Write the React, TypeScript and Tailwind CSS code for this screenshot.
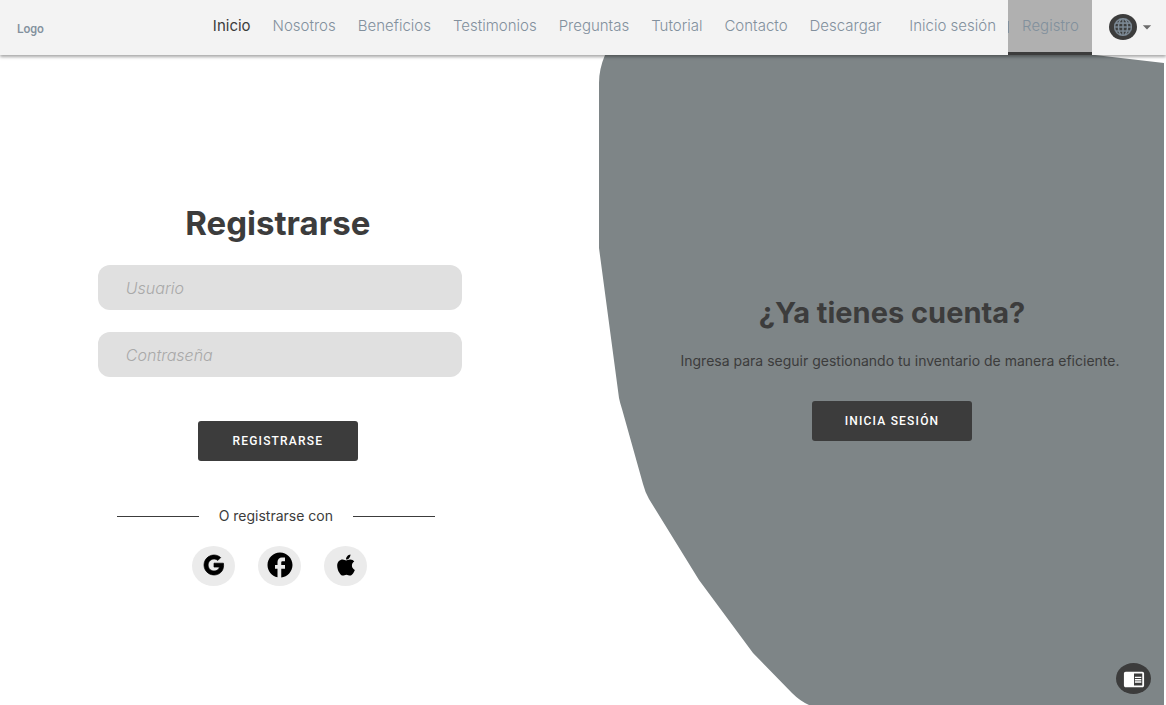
import React from "react";
import { RiGoogleFill } from "react-icons/ri";
import { MdFacebook, MdChromeReaderMode, MdArrowDropDown } from "react-icons/md";
import { FaApple } from "react-icons/fa";
import { BsGlobe } from "react-icons/bs";

const links = ["Nosotros", "Beneficios", "Testimonios", "Preguntas", "Tutorial", "Contacto", "Descargar"];

const socials = [
  { name: "Google", icon: <RiGoogleFill className="h-6 w-6" stroke="currentColor" strokeWidth={0.7} /> },
  { name: "Facebook", icon: <MdFacebook className="h-[30px] w-[30px]" /> },
  { name: "Apple", icon: <FaApple className="h-6 w-6" /> },
];

function Header() {
  return (
    <header className="relative z-10 flex h-[55px] items-stretch bg-[#f3f3f3] pl-[17px] pr-[9px] text-[#82909d] shadow-[0_2px_3px_rgba(0,0,0,0.35)]">
      <a href="#" className="mt-0.5 self-center font-['Roboto',sans-serif] text-[12px] font-medium text-[#82909d]">
        Logo
      </a>
      <nav className="ml-auto flex items-stretch text-[15px] font-light">
        <div className="flex items-center gap-[22px] pb-0.5">
          <a href="#inicio" className="font-normal text-[#3c3c3c]">
            Inicio
          </a>
          {links.map((l) => (
            <a key={l} href={"#" + l.toLowerCase()}>
              {l}
            </a>
          ))}
          <a href="#sesion" className="ml-1.5">
            Inicio sesión
          </a>
        </div>
        <a
          href="#registro"
          className="ml-3 flex w-[84px] items-center border-b-[3px] border-[#3c3c3c] bg-[#b0b0b0] pt-px"
        >
          <span className="h-3 w-px bg-[#82909d]" />
          <span className="flex-1 text-center">Registro</span>
        </a>
      </nav>
      <button type="button" aria-label="Idioma" className="ml-[17px] flex items-center pb-0.5">
        <span className="flex h-[26px] w-7 items-center justify-center rounded-[50%] bg-[#3c3c3c]">
          <BsGlobe className="h-[18px] w-[18px]" stroke="currentColor" strokeWidth={0.3} />
        </span>
        <MdArrowDropDown className="h-5 w-5 text-[#6b6b6b]" />
      </button>
    </header>
  );
}

function Field({ id, label, type }: { id: string; label: string; type: string }) {
  return (
    <input
      id={id}
      type={type}
      aria-label={label}
      placeholder={label}
      className="h-[45px] w-full rounded-xl bg-[#e0e0e0] px-7 text-[16px] text-[#3c3c3c] outline-none placeholder:font-light placeholder:italic placeholder:text-[#a9a9a9]"
    />
  );
}

function ActionButton({ children }: { children: React.ReactNode }) {
  return (
    <button
      type="submit"
      className="h-10 w-40 rounded-[3px] bg-[#3c3c3c] font-['Roboto',sans-serif] text-[12px] font-medium tracking-widest text-white"
    >
      {children}
    </button>
  );
}

export default function App() {
  return (
    <div className="flex min-h-screen flex-col bg-white font-['Inter',sans-serif] text-[#3c3c3c]">
      <Header />
      <main className="grid flex-1 grid-cols-1 grid-rows-1 overflow-hidden">
        <div className="relative col-start-1 row-start-1">
          <svg
            aria-hidden="true"
            viewBox="0 0 1166 650"
            preserveAspectRatio="none"
            className="absolute inset-0 h-full w-full"
          >
            <path
              fill="#7e8587"
              d="M605 0 Q599 14 599 28 V193 L619 343 Q620 348 622 354 L643 429 Q645 437 649 444 L699 525 L753 598 L792 638 Q800 646 809 650 H1164 V8 L1095 0 Z"
            />
          </svg>
        </div>
        <div className="relative col-start-1 row-start-1 flex">
          <section className="flex w-[48%] justify-center pb-10 pt-[144px]">
            <form className="flex w-[364px] flex-col items-center" onSubmit={(e) => e.preventDefault()}>
              <h1 className="pr-1 text-[33px] font-bold leading-[48px]">Registrarse</h1>
              <div className="mt-[18px] flex w-full flex-col gap-[22px]">
                <Field id="usuario" label="Usuario" type="text" />
                <Field id="contrasena" label="Contraseña" type="password" />
              </div>
              <div className="mt-11 pr-1">
                <ActionButton>REGISTRARSE</ActionButton>
              </div>
              <div className="mt-[43px] flex items-center gap-5 pr-2 text-[14px] leading-6">
                <span className="h-px w-[82px] bg-[#3c3c3c]" />
                O registrarse con
                <span className="h-px w-[82px] bg-[#3c3c3c]" />
              </div>
              <div className="mt-[18px] flex gap-[23px]">
                {socials.map((s) => (
                  <button
                    key={s.name}
                    type="button"
                    aria-label={s.name}
                    className="flex h-10 w-[43px] items-center justify-center rounded-[50%] bg-[#ebebeb] pb-0.5 text-black"
                  >
                    {s.icon}
                  </button>
                ))}
              </div>
            </form>
          </section>
          <section className="ml-auto flex w-[47%] flex-col items-center pt-[236px]">
            <h2 className="text-[29px] font-bold leading-[44px]">¿Ya tienes cuenta?</h2>
            <p className="mt-[14px] pl-4 text-[14px] leading-6">
              Ingresa para seguir gestionando tu inventario de manera eficiente.
            </p>
            <div className="mt-7">
              <ActionButton>INICIA SESIÓN</ActionButton>
            </div>
          </section>
        </div>
      </main>
      <button
        type="button"
        aria-label="Modo lectura"
        className="fixed bottom-[11px] right-[15px] flex h-[31px] w-[35px] items-center justify-center rounded-[50%] bg-[#3c3c3c] text-white"
      >
        <MdChromeReaderMode className="h-[22px] w-[22px]" />
      </button>
    </div>
  );
}
